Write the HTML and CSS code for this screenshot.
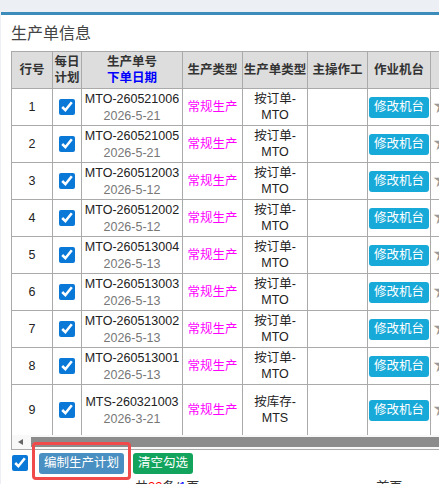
FILE: index.html
```html
<!DOCTYPE html>
<html lang="zh-CN">
<head>
<meta charset="utf-8">
<title>生产单信息</title>
<link rel="stylesheet" href="styles.css">
</head>
<body>
<div class="card">
  <h3 class="title">生产单信息</h3>
  <div class="tablewrap">
    <table class="grid">
      <colgroup>
        <col class="c-no"><col class="c-plan"><col class="c-order"><col class="c-type"><col class="c-otype"><col class="c-op"><col class="c-mach"><col class="c-star">
      </colgroup>
      <thead>
        <tr>
          <th>行号</th>
          <th>每日<br>计划</th>
          <th>生产单号<br><span class="blue">下单日期</span></th>
          <th>生产类型</th>
          <th>生产单类型</th>
          <th>主操作工</th>
          <th>作业机台</th>
          <th></th>
        </tr>
      </thead>
      <tbody>
        <tr><td>1</td><td><input type="checkbox" class="cb" checked></td><td><div class="ord">MTO-260521006</div><div class="date">2026-5-21</div></td><td class="mag">常规生产</td><td>按订单-<br>MTO</td><td></td><td><button class="btn btn-aqua">修改机台</button></td><td class="star">★</td></tr>
        <tr><td>2</td><td><input type="checkbox" class="cb" checked></td><td><div class="ord">MTO-260521005</div><div class="date">2026-5-21</div></td><td class="mag">常规生产</td><td>按订单-<br>MTO</td><td></td><td><button class="btn btn-aqua">修改机台</button></td><td class="star">★</td></tr>
        <tr><td>3</td><td><input type="checkbox" class="cb" checked></td><td><div class="ord">MTO-260512003</div><div class="date">2026-5-12</div></td><td class="mag">常规生产</td><td>按订单-<br>MTO</td><td></td><td><button class="btn btn-aqua">修改机台</button></td><td class="star">★</td></tr>
        <tr><td>4</td><td><input type="checkbox" class="cb" checked></td><td><div class="ord">MTO-260512002</div><div class="date">2026-5-12</div></td><td class="mag">常规生产</td><td>按订单-<br>MTO</td><td></td><td><button class="btn btn-aqua">修改机台</button></td><td class="star">★</td></tr>
        <tr><td>5</td><td><input type="checkbox" class="cb" checked></td><td><div class="ord">MTO-260513004</div><div class="date">2026-5-13</div></td><td class="mag">常规生产</td><td>按订单-<br>MTO</td><td></td><td><button class="btn btn-aqua">修改机台</button></td><td class="star">★</td></tr>
        <tr><td>6</td><td><input type="checkbox" class="cb" checked></td><td><div class="ord">MTO-260513003</div><div class="date">2026-5-13</div></td><td class="mag">常规生产</td><td>按订单-<br>MTO</td><td></td><td><button class="btn btn-aqua">修改机台</button></td><td class="star">★</td></tr>
        <tr><td>7</td><td><input type="checkbox" class="cb" checked></td><td><div class="ord">MTO-260513002</div><div class="date">2026-5-13</div></td><td class="mag">常规生产</td><td>按订单-<br>MTO</td><td></td><td><button class="btn btn-aqua">修改机台</button></td><td class="star">★</td></tr>
        <tr><td>8</td><td><input type="checkbox" class="cb" checked></td><td><div class="ord">MTO-260513001</div><div class="date">2026-5-13</div></td><td class="mag">常规生产</td><td>按订单-<br>MTO</td><td></td><td><button class="btn btn-aqua">修改机台</button></td><td class="star">★</td></tr>
        <tr class="tall"><td>9</td><td><input type="checkbox" class="cb" checked></td><td><div class="ord">MTS-260321003</div><div class="date">2026-3-21</div></td><td class="mag">常规生产</td><td>按库存-<br>MTS</td><td></td><td><button class="btn btn-aqua">修改机台</button></td><td class="star">★</td></tr>
      </tbody>
    </table>
    <div class="hscroll"><span class="arrow"></span><span class="thumb"></span></div>
  </div>
  <div class="actions">
    <input type="checkbox" class="cb" checked>
    <span class="marked"><button class="btn btn-blue">编制生产计划</button></span>
    <button class="btn btn-green">清空勾选</button>
  </div>
  <div class="pager">
    <span class="total">共<span class="red">33</span>条/<span class="blue">1</span>页</span>
    <span class="first">首页</span>
  </div>
</div>
</body>
</html>
```
FILE: styles.css
```css
html, body {
  margin: 0;
  padding: 0;
  height: 484px;
  overflow: hidden;
  background: #ecf0f5;
  font-family: "Liberation Sans", "Noto Sans CJK SC", sans-serif;
  font-size: 13px;
  color: #333;
}

.card {
  box-sizing: border-box;
  margin: 12px 0 0 1px;
  border-top: 3px solid #3c8dbc;
  background: #fff;
  padding: 0 0 0 10px;
  overflow: hidden;
  height: 472px;
}

.title {
  margin: 8px 0 7px 0;
  font-size: 16px;
  line-height: 21px;
  font-weight: normal;
  color: #444;
}

.tablewrap {
  width: 560px;
}

.grid {
  border-collapse: collapse;
  table-layout: fixed;
  width: 490px;
}

.c-no { width: 41px; }
.c-plan { width: 29px; }
.c-order { width: 101px; }
.c-type { width: 60px; }
.c-otype { width: 65px; }
.c-op { width: 60px; }
.c-mach { width: 63px; }
.c-star { width: 71px; }

.grid th, .grid td {
  border: 1px solid #aaa;
  text-align: center;
  vertical-align: middle;
  padding: 0;
  line-height: 16px;
  white-space: nowrap;
}

.grid th {
  background: #dddddd;
  font-weight: bold;
  font-size: 12.5px;
  height: 36px;
  color: #333;
}

.grid td {
  height: 36px;
  color: #222;
  font-size: 12.5px;
}

.grid tr.tall td {
  height: 50px;
  border-bottom: none;
}

.blue { color: #0000ff; }
.red { color: #ff0000; }

.ord { color: #222; font-size: 12.5px; }
.date { color: #777; font-size: 12.5px; margin-top: 1px; }

.grid td.mag { color: #ff00ff; }

.cb {
  width: 16px;
  height: 16px;
  margin: 0;
  vertical-align: middle;
  accent-color: #0a78d7;
}

.btn {
  border: none;
  border-radius: 3px;
  color: #fff;
  font-family: "Liberation Sans", "Noto Sans CJK SC", sans-serif;
  font-size: 12.5px;
  line-height: 17px;
  padding: 2px 5px;
  cursor: pointer;
}

.btn-aqua { background: #17a9d8; }
.btn-blue { background: #4a8fc1; }
.btn-green { background: #12a45c; }

.grid td.star {
  color: #999;
  font-size: 17px;
  text-align: left;
  padding-left: 2px;
}

.hscroll {
  position: relative;
  height: 14px;
  border-left: 1px solid #aaa;
  border-bottom: 1px solid #aaa;
  background: #f8f8f8;
}

.hscroll .arrow {
  position: absolute;
  left: 6px;
  top: 4px;
  width: 0;
  height: 0;
  border-top: 3.5px solid transparent;
  border-bottom: 3.5px solid transparent;
  border-right: 5px solid #666;
}

.hscroll .thumb {
  position: absolute;
  left: 19px;
  right: 0;
  top: 2px;
  height: 10px;
  background: #8c8c8c;
}

.actions {
  display: flex;
  align-items: center;
  height: 26px;
  padding-left: 1px;
}

.actions .cb {
  margin-right: 11px;
}

.marked {
  position: relative;
  display: inline-block;
  margin-right: 9px;
}

.marked .btn {
  display: block;
}

.marked::after {
  content: "";
  position: absolute;
  top: -11px;
  bottom: -6px;
  left: -7px;
  right: -7px;
  border: 3px solid #f04a4a;
  border-radius: 4px;
  pointer-events: none;
}

.pager {
  display: flex;
  margin-top: 2px;
  padding-left: 124px;
  line-height: 18px;
  color: #333;
}

.pager .first {
  margin-left: 177px;
}
```
